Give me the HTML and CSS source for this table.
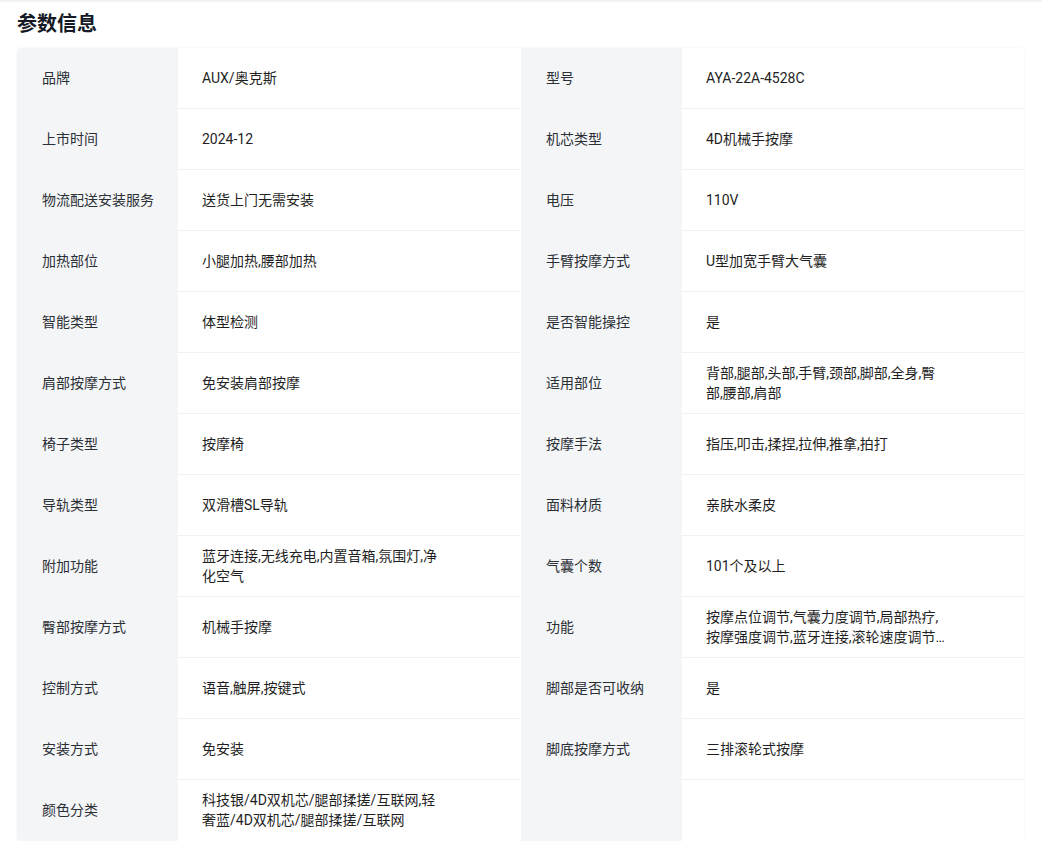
FILE: index.html
```html
<!DOCTYPE html>
<html lang="zh">
<head>
<meta charset="utf-8">
<link rel="stylesheet" href="styles.css">
</head>
<body>
<div class="topline"></div>
<section class="params">
  <h2 class="title">参数信息</h2>
  <div class="table">
    <div class="row"><div class="k">品牌</div><div class="v"><span>AUX/奥克斯</span></div><div class="k">型号</div><div class="v"><span>AYA-22A-4528C</span></div></div>
    <div class="row"><div class="k">上市时间</div><div class="v"><span>2024-12</span></div><div class="k">机芯类型</div><div class="v"><span>4D机械手按摩</span></div></div>
    <div class="row"><div class="k">物流配送安装服务</div><div class="v"><span>送货上门无需安装</span></div><div class="k">电压</div><div class="v"><span>110V</span></div></div>
    <div class="row"><div class="k">加热部位</div><div class="v"><span>小腿加热,腰部加热</span></div><div class="k">手臂按摩方式</div><div class="v"><span>U型加宽手臂大气囊</span></div></div>
    <div class="row"><div class="k">智能类型</div><div class="v"><span>体型检测</span></div><div class="k">是否智能操控</div><div class="v"><span>是</span></div></div>
    <div class="row"><div class="k">肩部按摩方式</div><div class="v"><span>免安装肩部按摩</span></div><div class="k">适用部位</div><div class="v"><span>背部,腿部,头部,手臂,颈部,脚部,全身,臀部,腰部,肩部</span></div></div>
    <div class="row"><div class="k">椅子类型</div><div class="v"><span>按摩椅</span></div><div class="k">按摩手法</div><div class="v"><span>指压,叩击,揉捏,拉伸,推拿,拍打</span></div></div>
    <div class="row"><div class="k">导轨类型</div><div class="v"><span>双滑槽SL导轨</span></div><div class="k">面料材质</div><div class="v"><span>亲肤水柔皮</span></div></div>
    <div class="row"><div class="k">附加功能</div><div class="v"><span>蓝牙连接,无线充电,内置音箱,氛围灯,净化空气</span></div><div class="k">气囊个数</div><div class="v"><span>101个及以上</span></div></div>
    <div class="row"><div class="k">臀部按摩方式</div><div class="v"><span>机械手按摩</span></div><div class="k">功能</div><div class="v"><span>按摩点位调节,气囊力度调节,局部热疗,按摩强度调节,蓝牙连接,滚轮速度调节,定时关机</span></div></div>
    <div class="row"><div class="k">控制方式</div><div class="v"><span>语音,触屏,按键式</span></div><div class="k">脚部是否可收纳</div><div class="v"><span>是</span></div></div>
    <div class="row"><div class="k">安装方式</div><div class="v"><span>免安装</span></div><div class="k">脚底按摩方式</div><div class="v"><span>三排滚轮式按摩</span></div></div>
    <div class="row last"><div class="k">颜色分类</div><div class="v"><span>科技银/4D双机芯/腿部揉搓/互联网,轻奢蓝/4D双机芯/腿部揉搓/互联网</span></div><div class="k"></div><div class="v"><span></span></div></div>
  </div>
</section>
</body>
</html>
```

FILE: styles.css
```css
html, body {
  margin: 0;
  padding: 0;
  background: #ffffff;
  font-family: Roboto, "Noto Sans CJK SC", sans-serif;
  color: #1f1f1f;
}

.topline {
  height: 2px;
  background: #f1f2f4;
}

.params {
  padding: 0 18px 0 17px;
}

.title {
  margin: 0;
  height: 45px;
  display: flex;
  align-items: center;
  padding-bottom: 4px;
  box-sizing: border-box;
  font-family: "Noto Sans CJK SC", sans-serif;
  font-size: 20px;
  font-weight: 700;
  color: #151a26;
  line-height: 26px;
}

.table {
  margin-top: 1px;
  background: #ffffff;
  border-radius: 4px;
  box-shadow: 0 0 2px rgba(0, 0, 0, 0.08);
  overflow: hidden;
}

.row {
  display: grid;
  grid-template-columns: 161px 343px 161px 1fr;
}

.k {
  background: #f4f5f7;
  height: 61px;
  box-sizing: border-box;
  padding-bottom: 1px;
  display: flex;
  align-items: center;
  padding-left: 25px;
  font-size: 14px;
  line-height: 20px;
  color: #2b2f36;
}

.v {
  height: 61px;
  box-sizing: border-box;
  border-bottom: 1px solid #f0f1f3;
  display: flex;
  align-items: center;
  padding-left: 24px;
  padding-bottom: 0;
  font-size: 14px;
  line-height: 20px;
  color: #1f1f1f;
}

.row.last .v {
  border-bottom: none;
  padding-bottom: 1px;
}

.v span {
  max-width: 240px;
  display: -webkit-box;
  -webkit-box-orient: vertical;
  -webkit-line-clamp: 2;
  overflow: hidden;
  text-overflow: ellipsis;
  word-break: break-all;
}
```
